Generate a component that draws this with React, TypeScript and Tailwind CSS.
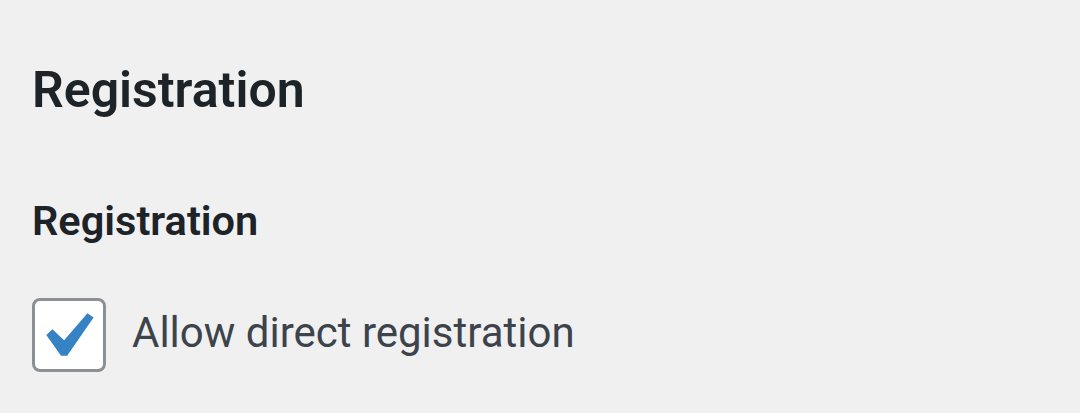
export default function App() {
  return (
    <div className="min-h-[413px] w-full bg-[#f0f0f1] px-8 pt-[58px] font-['Roboto',sans-serif]">
      <h1 className="text-[50px] leading-[64px] font-semibold text-[#1d2327]">Registration</h1>
      <h2 className="mt-[72px] text-[41.5px] leading-[54px] font-semibold text-[#1d2327]">Registration</h2>
      <label className="mt-[50px] flex items-center gap-[26px]">
        <span className="relative block h-[74px] w-[74px] shrink-0 rounded-[8px] border-[3px] border-[#8c8f94] bg-white">
          <svg viewBox="0 0 20 20" className="absolute -left-[15px] -top-[10px] h-[91px] w-[91px]">
            <path d="M14.83 4.89l1.34.94-5.81 8.38H9.02L5.78 9.67l1.34-1.25 2.57 2.4z" fill="#3582c4" />
          </svg>
        </span>
        <span className="mb-[5px] text-[42px] leading-[54px] text-[#3c434a]">Allow direct registration</span>
      </label>
    </div>
  );
}
